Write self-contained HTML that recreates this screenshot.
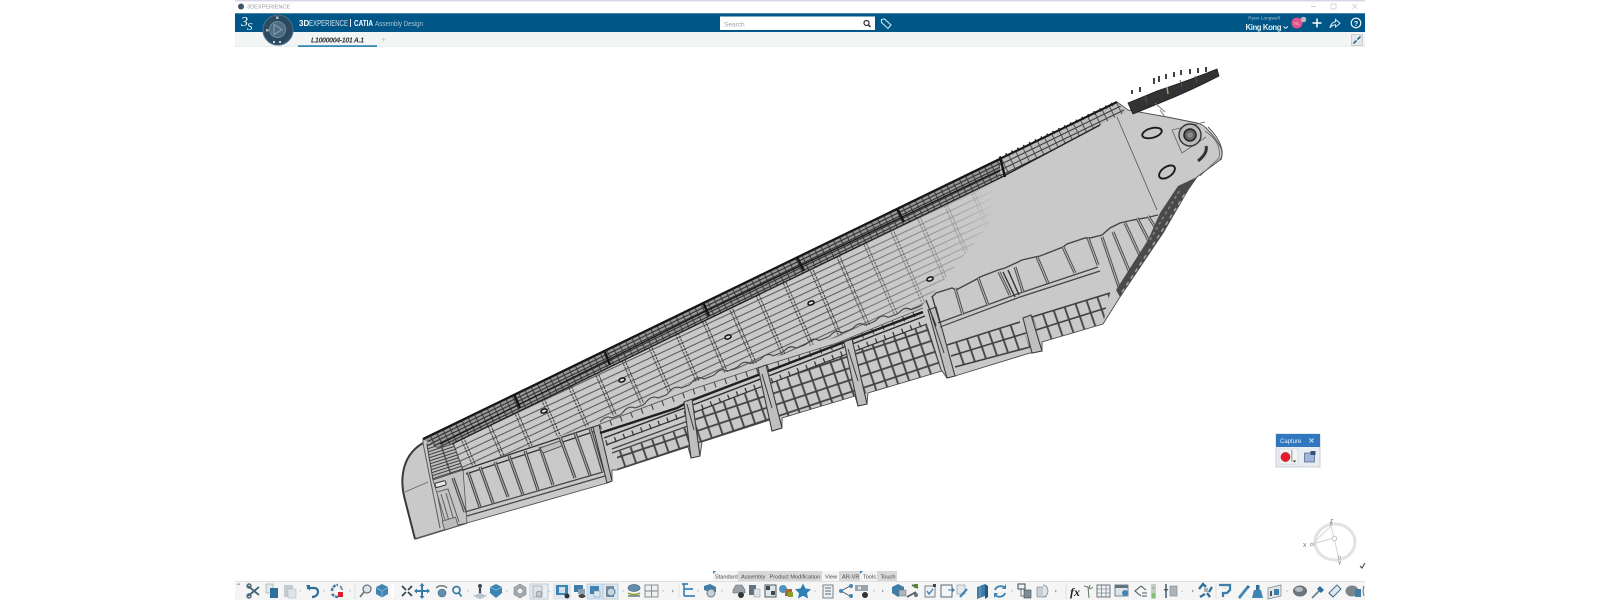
<!DOCTYPE html>
<html><head><meta charset="utf-8"><title>3DEXPERIENCE CATIA Assembly Design</title>
<style>html,body{margin:0;padding:0;background:#fff;width:1600px;height:600px;overflow:hidden}svg{display:block;font-family:"Liberation Sans",sans-serif;filter:blur(.35px)}</style></head>
<body>
<svg width="1600" height="600" viewBox="0 0 1600 600" xmlns="http://www.w3.org/2000/svg">
<defs>
<pattern id="span" patternUnits="userSpaceOnUse" width="40" height="6.6" patternTransform="translate(690,308) rotate(-25)"><line x1="0" x2="40" y1="2" y2="2" stroke="#4c4c4c" stroke-width=".95"/></pattern>
<pattern id="rib" patternUnits="userSpaceOnUse" width="40" height="29.8" patternTransform="translate(787,282) rotate(66.5)"><line x1="0" x2="40" y1="1" y2="1" stroke="#383838" stroke-width="1" stroke-dasharray="2.4 .9"/><line x1="0" x2="40" y1="3.8" y2="3.8" stroke="#383838" stroke-width="1" stroke-dasharray="2.4 .9"/></pattern>
<pattern id="band" patternUnits="userSpaceOnUse" width="7" height="3.4" patternTransform="translate(423,439) rotate(-25.9)"><rect width="7" height="3.4" fill="#9a9a9a"/><line x1="0" x2="7" y1=".8" y2=".8" stroke="#222" stroke-width="1"/><line x1="1" x2="1" y1="0" y2="3.4" stroke="#333" stroke-width=".9"/></pattern>
<pattern id="band2" patternUnits="userSpaceOnUse" width="8" height="5" patternTransform="translate(1000,158) rotate(-25.9)"><rect width="8" height="5" fill="#bcbcbc"/><line x1="0" x2="8" y1="1" y2="1" stroke="#333" stroke-width="1"/><line x1="1" x2="1" y1="0" y2="5" stroke="#444" stroke-width=".9"/></pattern>
<pattern id="gridc" patternUnits="userSpaceOnUse" width="20" height="11.4" patternTransform="translate(700,400) rotate(71)"><line x1="0" x2="20" y1="1.2" y2="1.2" stroke="#444" stroke-width="1.800"/></pattern>
<pattern id="gridr" patternUnits="userSpaceOnUse" width="20" height="11.5" patternTransform="translate(690,408) rotate(-18.4)"><line x1="0" x2="20" y1="1" y2="1" stroke="#404040" stroke-width="1.700"/></pattern>
<pattern id="stripes" patternUnits="userSpaceOnUse" width="20" height="3" patternTransform="rotate(-18)"><rect width="20" height="3" fill="#bdbdbd"/><line x1="0" x2="20" y1="1" y2="1" stroke="#3d3d3d" stroke-width="1"/></pattern>
<linearGradient id="fade" gradientUnits="userSpaceOnUse" x1="830" y1="0" x2="1000" y2="0"><stop offset="0" stop-color="#c9c9c9" stop-opacity="0"/><stop offset=".8" stop-color="#c9c9c9" stop-opacity=".7"/><stop offset="1" stop-color="#c9c9c9" stop-opacity="1"/></linearGradient>
<path id="tipribs" d="M453 478L465 512M468 472L480 507M480 467L493 503M495 462L508 497M509 456L523 495M525 451L538 490M540 447L553 485M560 437L575 478M575 433L590 475M590 428L603 472"/>
<path id="pilribs" d="M955 288L963 315M978 278L988 305M999 272L1010 295M1015 267L1023 292M1037 257L1048 283M1063 247L1075 273M1088 238L1098 265M1102 237L1120 290M1113 232L1130 273M1125 223L1142 260M1137 218L1150 243M1148 216L1157 230"/>
</defs>

<!-- window chrome -->
<rect x="235" y="0" width="1130" height="1.4" fill="#d6d6ea"/>
<circle cx="241" cy="6.5" r="3" fill="#3e5568"/>
<text x="247" y="8.6" font-size="5.6" fill="#9a9a9a">3DEXPERIENCE</text>
<rect x="1311" y="6" width="5" height=".8" fill="#c4c4c4"/>
<rect x="1331" y="4" width="5" height="5" fill="none" stroke="#cfcfcf" stroke-width=".8"/>
<path d="M1352.5 4.2l4.6 4.6M1357.1 4.2l-4.6 4.6" stroke="#cfcfcf" stroke-width=".8"/>

<rect x="235" y="13" width="1130" height="19" fill="#005686"/>
<rect x="235" y="13" width="1130" height=".8" fill="#5a94b4"/>
<rect x="235" y="32" width="1130" height="15" fill="#f3f5f5"/>
<rect x="235" y="46.4" width="1130" height=".6" fill="#e4e8ea"/>

<text x="241" y="26" font-size="14" font-style="italic" fill="#fff" font-family="Liberation Serif">3</text>
<text x="247" y="30" font-size="11" font-style="italic" fill="#fff" font-family="Liberation Serif">S</text>
<circle cx="278" cy="30" r="15.5" fill="#2b4a62"/>
<circle cx="278" cy="30" r="15" fill="none" stroke="#4f7088" stroke-width="1"/>
<circle cx="277.500" cy="29.500" r="8" fill="#4d6b80" stroke="#6f8a9c"/>
<path d="M274 24.500l8 5-8 5z" fill="none" stroke="#7f9aac" stroke-width="1.200"/>
<rect x="276" y="16.500" width="2.500" height="2.500" fill="#a8b8c4"/>
<rect x="266" y="29" width="2.500" height="2.500" fill="#a8b8c4"/>
<rect x="273" y="41" width="2" height="2" fill="#c8d4dc"/><rect x="279" y="41" width="2" height="2" fill="#c8d4dc"/>
<text x="299" y="26" font-size="8" font-weight="bold" fill="#fff">3D</text>
<text x="309" y="26" font-size="8" fill="#d4e2ea" textLength="39" lengthAdjust="spacingAndGlyphs">EXPERIENCE</text>
<rect x="350" y="19" width=".9" height="8" fill="#fff"/>
<text x="354" y="26" font-size="8" font-weight="bold" fill="#fff" textLength="19" lengthAdjust="spacingAndGlyphs">CATIA</text>
<text x="375" y="26" font-size="7.200" fill="#a9c6d8" textLength="48" lengthAdjust="spacingAndGlyphs">Assembly Design</text>

<text x="311" y="42.500" font-size="7" font-weight="bold" font-style="italic" fill="#333" textLength="53">L1000004-101 A.1</text>
<rect x="298" y="45.200" width="79" height="1.800" fill="#3a88b4"/>
<text x="381" y="42" font-size="8" fill="#c4c8ca">+</text>

<rect x="720" y="16.500" width="155" height="13.500" fill="#fff"/>
<text x="724" y="26.500" font-size="6.500" fill="#9ba4aa">Search</text>
<circle cx="866.500" cy="23" r="2.500" fill="none" stroke="#333" stroke-width="1.200"/><path d="M868.500 25l2 2" stroke="#333" stroke-width="1.500"/>
<path d="M881.500 19.500l3-.5 6.500 6-3 3.500-6.500-6z" fill="none" stroke="#cfe2ee" stroke-width="1.100"/>

<text x="1264" y="19.500" font-size="4.800" fill="#a6c6da" text-anchor="middle">Ryan Longwell</text>
<text x="1263.500" y="29.800" font-size="7.800" font-weight="bold" fill="#e4eef4" text-anchor="middle" textLength="36" lengthAdjust="spacing">King Kong</text>
<path d="M1283.500 26.500l2.200 1.800 2.200-1.800" fill="none" stroke="#fff" stroke-width=".9"/>
<circle cx="1297" cy="23" r="5.500" fill="#e4508f"/>
<text x="1297" y="25" font-size="4.500" fill="#f4c0d8" text-anchor="middle">RL</text>
<circle cx="1303.500" cy="19.500" r="2.800" fill="#b8bcc0"/>
<path d="M1317 18.500v9M1312.500 23h9" stroke="#fff" stroke-width="1.500"/>
<path d="M1330 28c.5-4 3-6 5.500-6.200v-2.300l4.500 3.800-4.500 3.800v-2.300c-2 0-4 1-5.500 3z" fill="none" stroke="#dfeaf0" stroke-width="1"/>
<circle cx="1356" cy="23" r="4.800" fill="none" stroke="#fff" stroke-width="1.100"/>
<text x="1356" y="25.800" font-size="7" font-weight="bold" fill="#fff" text-anchor="middle">?</text>
<rect x="1351.500" y="34.500" width="11" height="11" fill="#e4e8ea" stroke="#b4bcc0" stroke-width=".6"/>
<path d="M1353.500 43.500l3-3M1360.500 36.500l-3 3" stroke="#0d4f78" stroke-width="1.400"/>

<!-- wing -->
<g>
<path fill="#c9c9c9" stroke="#4a4a4a" stroke-width=".9" d="M423 439L1117 102L1128 110L1167 117L1197 123Q1204 125 1208 130Q1217 139 1222 150Q1223 156 1220 160L1197 177L1188 190L1163 233L1120 297L1103 324L1042 342L1042 351L1032 353L1030 353L955 376L947 378L942 371L868 393L867 404L858 406L855 396L782 418L782 428L772 431L770 420L702 442L700 456L691 458L688 447L617 470L612 470L612 481L607 483L467 523L415 539L405 500Q401 485 403 473Q406 453 423 443Z"/>

<!-- nose -->
<path d="M423 443Q406 453 403 473Q401 485 405 500L415 539" fill="none" stroke="#3a3a3a" stroke-width="2"/>
<path d="M405 492L428 482" stroke="#666" stroke-width=".8"/>
<path d="M415 539L467 523" stroke="#555" stroke-width="1.700"/>
<path d="M423 443L440 528M427 443L444 527" stroke="#5a5a5a" stroke-width="1"/>
<polygon points="427,445 452,440 463,470 433,480" fill="url(#stripes)" stroke="#444" stroke-width="1"/>
<path d="M440 442L451 475" stroke="#444" stroke-width="1.200"/>
<polygon points="433,480 463,470 467,523 447,527" fill="#c4c4c4" stroke="#555" stroke-width=".8"/>
<rect x="435" y="482" width="11" height="4.500" rx="1.500" fill="#e6e6e6" stroke="#333" transform="rotate(-16 440 484)"/>
<path d="M437 492L448 489L459 522M441 494L449 521M446 493L454 521" fill="none" stroke="#666" stroke-width="1.100"/>
<rect x="443" y="519" width="14" height="9" fill="#bbb" stroke="#555" stroke-width=".8" transform="rotate(-17 450 523)"/>

<!-- upper skin lines and ribs -->
<polygon points="452,440 1000,173 1000,212 923,305 837,337 757,363 690,383 600,422 463,470" fill="url(#span)"/>
<polygon points="452,440 1000,173 1000,212 923,305 837,337 757,363 690,383 600,422 463,470" fill="url(#rib)"/>
<polygon points="830,250 1000,168 1005,212 923,305 837,337 830,340" fill="url(#fade)"/>

<!-- leading-edge band -->
<polygon points="423,439 1000,158 1000,178 452,444 437,448" fill="url(#band)"/>
<polygon points="1000,158 1117,102 1126,112 1100,125 1000,178" fill="url(#band2)"/>
<path d="M423 439L1117 102" stroke="#161616" stroke-width="2.100"/>
<path d="M1000 158L1117 102" stroke="#222" stroke-width="3.400" stroke-dasharray="1.500 5"/>
<path d="M452 444L700 323L1000 178L1100 125" fill="none" stroke="#222" stroke-width="1.400"/>
<path d="M440 444L700 314L1000 170" fill="none" stroke="#1c1c1c" stroke-width="1.400"/>
<path d="M514 394L520 408M604 350L610 365M703 302L709 316M797 257L804 271M897 208L904 222M1000 157L1005 177" stroke="#151515" stroke-width="2.400"/>

<!-- holes -->
<g fill="#dcdcdc" stroke="#111" stroke-width="1.500">
<ellipse cx="544" cy="411" rx="3.200" ry="1.900" transform="rotate(-20 544 411)"/>
<ellipse cx="622" cy="380" rx="3.200" ry="1.900" transform="rotate(-20 622 380)"/>
<ellipse cx="728" cy="337" rx="3.200" ry="1.900" transform="rotate(-20 728 337)"/>
<ellipse cx="811" cy="303" rx="3.200" ry="1.900" transform="rotate(-20 811 303)"/>
<ellipse cx="930" cy="279" rx="3.200" ry="1.900" transform="rotate(-20 930 279)"/>
</g>

<!-- tip bays -->
<path d="M463 470L593 427M466 474L596 431" stroke="#333" stroke-width="1.300"/>
<path d="M465 512L603 472M467 516L605 476" stroke="#444" stroke-width="1.200"/>
<use href="#tipribs" fill="none" stroke="#4a4a4a" stroke-width="3.200"/>
<use href="#tipribs" fill="none" stroke="#b4b4b4" stroke-width="1"/>
<polygon points="540,448 560,441 562,446 543,453" fill="#c0c0c0" stroke="#555"/>
<polygon points="593,427 599,425 612,481 607,483" fill="#b8b8b8" stroke="#333" stroke-width="1"/>

<!-- spar -->
<path d="M600 422q6 -7 12 -4l8 -3q2 -1 3 -3q6 -7 12 -4l8 -3q2 -1 3 -3q6 -7 12 -4l8 -3q2 -1 3 -3q6 -7 12 -4l8 -3q2 -1 3 -3" fill="none" stroke="#444" stroke-width="1.100"/>
<path d="M692 382q6 -7 12 -3l8 -3q2 -1 3 -1.700q6 -7 12 -3l8 -3q2 -1 3 -1.700q6 -7 12 -3l8 -3q2 -1 3 -1.700q6 -7 12 -3l8 -3q2 -1 3 -1.700q6 -7 12 -3l8 -3q2 -1 3 -1.700q6 -7 12 -3l8 -3q2 -1 3 -1.700q6 -7 12 -3l8 -3q2 -1 3 -1.700q6 -7 12 -3l8 -3q2 -1 3 -1.700q6 -7 12 -3l8 -3q2 -1 3 -1.700q6 -7 12 -3l8 -3q2 -1 3 -1.700" fill="none" stroke="#444" stroke-width="1.100"/>
<path d="M600 427L690 393L757 371L837 346L923 311" fill="none" stroke="#444" stroke-width="5.500" stroke-dasharray="1.100 10"/>
<path d="M600 424L690 390L757 368L837 343L923 308" fill="none" stroke="#555" stroke-width=".9"/>
<path d="M600 433L677 408L690 401L847 341L923 312" fill="none" stroke="#1f1f1f" stroke-width="2.400"/>
<path d="M604 438L690 406L847 346L925 316" fill="none" stroke="#2c2c2c" stroke-width="1.400"/>
<path d="M606 443L690 412L847 352L927 322" fill="none" stroke="#3c3c3c" stroke-width="5.500" stroke-dasharray="1.300 8"/>
<path d="M606 445L690 414L847 354L927 324" fill="none" stroke="#333" stroke-width="1.200"/>

<!-- lower grids -->
<polygon points="617,452 690,426 688,447 617,470" fill="url(#gridc)"/>
<polygon points="617,452 690,426 688,447 617,470" fill="url(#gridr)"/>
<path d="M612 449L688 421M612 453L688 426" stroke="#444" stroke-width="1.300"/>
<polygon points="690,414 927,324 942,371 868,393 855,396 782,418 770,420 702,442 688,447" fill="url(#gridc)"/>
<polygon points="690,414 927,324 942,371 868,393 855,396 782,418 770,420 702,442 688,447" fill="url(#gridr)"/>
<polygon points="947,345 1020,322 1030,347 955,367" fill="url(#gridc)"/>
<polygon points="1032,317 1110,293 1103,324 1042,342" fill="url(#gridc)"/>
<path d="M947 345L1020 322M951 356L1026 333M955 367L1030 347M1032 317L1110 293M1036 330L1106 308" stroke="#3f3f3f" stroke-width="1.600" fill="none"/>

<!-- tabs -->
<g fill="#bfbfbf" stroke="#3c3c3c" stroke-width="1.100">
<polygon points="684,402 692,399 700,456 691,458"/>
<polygon points="758,368 766,365 782,428 772,431"/>
<polygon points="844,342 852,339 867,404 858,406"/>
<polygon points="928,310 936,307 955,376 947,378"/>
<polygon points="1023,318 1031,315 1042,351 1032,353"/>
</g>
<path d="M687 404l7 26M762 374l10 34M848 349l10 32M932 317l12 36" stroke="#3c3c3c" stroke-width="1"/>

<!-- pillows -->
<path d="M932 297L936 293L952 288L956 290L975 280L980 277L998 270L1005 268L1018 262L1022 260L1035 257L1040 256L1063 247L1067 244L1085 238L1090 238L1102 235L1110 228L1120 223L1133 220L1145 218L1158 215" fill="none" stroke="#444" stroke-width="1.400"/>
<path d="M938 323L1020 293L1098 267M940 327L1020 297L1100 271" fill="none" stroke="#444" stroke-width="1.200"/>
<use href="#pilribs" fill="none" stroke="#4f4f4f" stroke-width="3"/>
<use href="#pilribs" fill="none" stroke="#bdbdbd" stroke-width="1"/>
<path d="M1003 272l12 25M1008 270l11 25" stroke="#333" stroke-width="1.400"/>
<path d="M932 296L940 323M926 300L936 326" stroke="#333" stroke-width="1.300"/>

<!-- root -->
<path d="M1117 117L1157 210" stroke="#555" stroke-width=".8"/>
<polygon points="1160,213 1178,186 1197,177 1188,190 1163,233 1120,297 1116,290 1148,240" fill="#4a4a4a"/>
<path d="M1122 292L1160 234L1186 192" fill="none" stroke="#a0a0a0" stroke-width="1.600" stroke-dasharray="4 4"/>
<path d="M1150 240L1164 216L1180 190" fill="none" stroke="#8a8a8a" stroke-width="1.400" stroke-dasharray="3 3"/>
<path d="M1172 130L1205 122M1172 130L1182 153L1206 137" fill="none" stroke="#666" stroke-width=".9"/>
<path d="M1205 131Q1222 142 1219 158L1200 176" fill="none" stroke="#666" stroke-width=".8"/>
<path d="M1208 127Q1226 145 1221 160" fill="none" stroke="#555" stroke-width="1"/>
<ellipse cx="1152" cy="133" rx="10" ry="4.800" transform="rotate(-15 1152 133)" fill="#c8c8c8" stroke="#1c1c1c" stroke-width="1.900"/>
<ellipse cx="1167" cy="172" rx="9" ry="5" transform="rotate(-35 1167 172)" fill="#c8c8c8" stroke="#1c1c1c" stroke-width="1.900"/>
<circle cx="1190" cy="135" r="11" fill="#bcbcbc" stroke="#333" stroke-width="1.400"/>
<circle cx="1190" cy="135" r="6" fill="#666" stroke="#222" stroke-width="1.500"/>
<circle cx="1190" cy="135" r="2.800" fill="#8a8a8a"/>
<path d="M1206 146Q1208 153 1198 161" fill="none" stroke="#333" stroke-width="3"/>

<!-- flap -->
<path d="M1128 103L1157 91Q1190 80 1217 69L1219 76Q1190 91 1160 103L1133 114Z" fill="#333" stroke="#1c1c1c" stroke-width=".8"/>
<path d="M1167 87l1 7" stroke="#a8a86a" stroke-width="1.400"/>
<path d="M1180 80l2 7M1195 76l2 7M1145 96l2 7" stroke="#555" stroke-width=".9"/>
<path d="M1155 103l10 9M1160 110l5 7" stroke="#777" stroke-width=".9"/>
<g stroke="#222" stroke-width="1.700">
<path d="M1132 90v4M1140 87v5M1154 78v6M1159 76v6M1166 74v5M1174 72v5M1181 70v5M1190 69v5M1198 68v5M1206 67v5"/>
</g>
</g>

<!-- capture panel -->
<rect x="1276" y="434" width="44" height="33" fill="#e9ecf1" stroke="#c0c6ce" stroke-width=".8"/>
<rect x="1276" y="434" width="44" height="13" fill="#2f78bf"/>
<text x="1280" y="443" font-size="6" fill="#e4eef8">Capture</text>
<path d="M1309.500 438.500l4 4M1313.500 438.500l-4 4" stroke="#cfe0f2" stroke-width=".9"/>
<rect x="1279" y="449" width="19" height="15" fill="#f2f3f5" stroke="#c8ccd2" stroke-width=".5"/>
<circle cx="1285.500" cy="457" r="4.600" fill="#e81c28" stroke="#a01820" stroke-width=".5"/>
<rect x="1291.500" y="450" width=".8" height="12" fill="#777"/>
<path d="M1293 460.500h3l-1.500 2z" fill="#222"/>
<rect x="1304.500" y="453" width="10" height="9" fill="#9fb6d6" stroke="#4a5f88" stroke-width=".7"/>
<rect x="1310.500" y="451" width="5" height="4" fill="#3d4f78"/>

<!-- compass -->
<ellipse cx="1335" cy="542" rx="20" ry="18" fill="none" stroke="#e2e2e2" stroke-width="3"/>
<path d="M1312 544L1334 538L1331 526L1312 544M1334 538L1339 559" fill="none" stroke="#dadada" stroke-width="1.200"/>
<circle cx="1334.500" cy="538.500" r="2.300" fill="#fff" stroke="#aaa" stroke-width=".7"/>
<path d="M1311 543l3 2-4 1zM1338 556l3 1-2 3zM1330 525l2 0-1-3z" fill="#fff" stroke="#999" stroke-width=".6"/>
<text x="1330" y="523" font-size="5" fill="#555">Z</text>
<text x="1303" y="547" font-size="5" fill="#555">X</text>
<text x="1338" y="565" font-size="5" fill="#555">Y</text>
<path d="M1360 566l2 2 3-5" fill="none" stroke="#444" stroke-width="1.100"/>

<!-- section tabs -->
<rect x="713" y="571" width="184" height="10" fill="#d8d8d8"/>
<rect x="713" y="571" width="25" height="10" fill="#f4f4f4"/>
<rect x="822" y="571" width="17" height="10" fill="#f4f4f4"/>
<rect x="860" y="571" width="17" height="10" fill="#f4f4f4"/>
<path d="M713 571h3l-3 3zM860 571h3l-3 3z" fill="#2f86c4"/>
<g font-size="5.600" fill="#4a4a4a">
<text x="715" y="578.500">Standard</text>
<text x="741" y="578.500">Assembly</text>
<text x="769.500" y="578.500">Product Modification</text>
<text x="825" y="578.500">View</text>
<text x="842" y="578.500">AR-VR</text>
<text x="863" y="578.500">Tools</text>
<text x="880.500" y="578.500">Touch</text>
</g>

<!-- toolbar -->
<rect x="235" y="581" width="1130" height="19" fill="#f5f5f5"/>
<rect x="235" y="581" width="1130" height=".9" fill="#dfdfdf"/>
<path d="M237 585l1.500-1.500 1.500 1.500" fill="none" stroke="#777" stroke-width=".6"/>
<g fill="#9aa0a4">
<circle cx="300" cy="591" r=".6"/><circle cx="324" cy="591" r=".6"/><circle cx="350" cy="591" r=".6"/><circle cx="468" cy="591" r=".6"/><circle cx="507" cy="591" r=".6"/><circle cx="549" cy="591" r=".6"/><circle cx="623" cy="591" r=".6"/><circle cx="663" cy="591" r=".6"/><circle cx="698" cy="591" r=".6"/><circle cx="722" cy="591" r=".6"/><circle cx="815" cy="591" r=".6"/><circle cx="874" cy="591" r=".6"/><circle cx="1012" cy="591" r=".6"/><circle cx="1182" cy="591" r=".6"/><circle cx="1287" cy="591" r=".6"/>
</g>
<path d="M672 589.500l2 1.500-2 1.500M882 589.500l2 1.500-2 1.500M1055 589.500l2 1.500-2 1.500M1192 589.500l2 1.500-2 1.500" fill="#9aa0a4"/>
<path d="M355 583v16M679 583v16M1066 583v16M1216 583v16" stroke="#dcdcdc" stroke-width=".8"/>
<rect x="530" y="584" width="18" height="15" fill="#e8eef2" stroke="#a8c0d0" stroke-width=".7"/>
<rect x="553" y="583.500" width="18" height="16" fill="#e0e8ee"/>
<rect x="587" y="584" width="16" height="15" fill="#d4e4f0" stroke="#a8c8e0" stroke-width=".7"/>
<rect x="603" y="584" width="15" height="15" fill="#e0e8ee" stroke="#a8c0d0" stroke-width=".7"/>

<!-- icons -->
<path d="M248 586l11 9M248 596l11-9" stroke="#466378" stroke-width="1.800"/><circle cx="249" cy="586" r="2" fill="none" stroke="#466378" stroke-width="1.400"/><circle cx="249" cy="596" r="2" fill="none" stroke="#466378" stroke-width="1.400"/>
<rect x="266" y="584" width="7" height="9" fill="#e4e8ec" stroke="#98a4ac" stroke-width=".6"/><rect x="270" y="588" width="8" height="10" fill="#2f6f9c"/>
<rect x="284" y="585" width="9" height="12" fill="#c4ccd0"/><rect x="288" y="589" width="8" height="9" fill="#dfe4e8" stroke="#aab4ba" stroke-width=".5"/>
<path d="M307 588h7c3 0 4 2 4 4s-2 5-6 5" fill="none" stroke="#2f6f9c" stroke-width="2.200"/><path d="M306 585l4 0v6z" fill="#2f6f9c"/>
<path d="M332 591c0-4 3-6 6-6M338 597c-3 0-6-2-6-4" fill="none" stroke="#3f7ca8" stroke-width="2.500" stroke-dasharray="3 1"/><rect x="338" y="592" width="5" height="5" fill="#d8202c"/><path d="M340 586c1 1 2 2 2 4" stroke="#7f98a8" stroke-width="2" fill="none"/>
<circle cx="367" cy="589" r="4" fill="#dfe6ea" stroke="#6a7880" stroke-width="1.300"/><path d="M364 592l-4 5" stroke="#6a7880" stroke-width="1.800"/>
<path d="M382 584l6 3v7l-6 3.500-6-3.500v-7z" fill="#3f85b4"/><path d="M382 591l6-3.500M382 591l-6-3.500M382 591v6" stroke="#a8d0e8" stroke-width=".6"/>
<rect x="391" y="584" width="3" height="14" fill="#fff"/>
<path d="M402 586l4 4M412 586l-4 4M402 596l4-4M412 596l-4-4" stroke="#33404a" stroke-width="1.600"/>
<path d="M422 584v14M415 591h14" stroke="#3a7ca8" stroke-width="2"/><path d="M422 583l-2.500 3h5zM422 599l-2.500-3h5zM414 591l3-2.500v5zM430 591l-3-2.500v5z" fill="#3a7ca8"/>
<path d="M436 588c3-3 8-3 11 0" fill="none" stroke="#6a7880" stroke-width="1.400"/><circle cx="442" cy="593" r="4" fill="#5f8fb0" stroke="#50626e" stroke-width=".6"/>
<circle cx="456.500" cy="590" r="3.500" fill="none" stroke="#3a7ca8" stroke-width="1.700"/><path d="M459 593l2.500 3.500" stroke="#3a7ca8" stroke-width="1.700"/>
<circle cx="480" cy="586" r="2" fill="#3a4c58"/><path d="M480 588v7" stroke="#3a4c58" stroke-width="2.200"/><path d="M473 596l7-3 7 3-7 3z" fill="#b8c4cc"/>
<path d="M496 584l6 3v6l-6 5-6-5v-6z" fill="#3f85b4"/><path d="M496 590l6-3M496 590l-6-3" stroke="#a8d0e8" stroke-width=".6"/>
<path d="M520 584l6 3.500v7l-6 3.500-6-3.500v-7z" fill="#a4acb2" stroke="#7a848a" stroke-width=".6"/><circle cx="520" cy="591" r="3" fill="#eef0f2" stroke="#7a848a" stroke-width=".7"/>
<rect x="533" y="586" width="9" height="11" fill="#dfe4e8" stroke="#94a0a8" stroke-width=".7"/><circle cx="539" cy="594" r="3" fill="#c0c8cc" stroke="#7a848a" stroke-width=".6"/>
<rect x="556" y="585" width="12" height="10" fill="#3f85b4"/><rect x="559" y="587" width="6" height="6" fill="#cfe0ec"/><circle cx="567" cy="596" r="2.500" fill="#333"/>
<rect x="574" y="585" width="9" height="7" fill="#3f7ca8"/><rect x="578" y="589" width="7" height="5" fill="#8aa0b0"/><ellipse cx="582" cy="596" rx="3.500" ry="2" fill="#444"/>
<rect x="590" y="586" width="9" height="8" fill="#3f85b4"/><rect x="594" y="591" width="6" height="6" fill="#dfe8ee" stroke="#7a8a94" stroke-width=".5"/>
<rect x="606" y="586" width="8" height="11" fill="#7f8c94"/><circle cx="611" cy="592" r="4" fill="#c8d4dc" stroke="#3f7ca8" stroke-width="1"/>
<ellipse cx="634" cy="588" rx="6" ry="3.500" fill="#5f8fb0" stroke="#5a6a74" stroke-width=".7"/><path d="M628 593c3 2 9 2 12 0" fill="none" stroke="#88a030" stroke-width="1.500"/><path d="M628 596h12" stroke="#6a7880" stroke-width="1.500"/>
<rect x="645" y="585" width="13" height="12" fill="#eef0f2" stroke="#7a848a" stroke-width=".9"/><path d="M651.500 585v12M645 591h13" stroke="#7a848a" stroke-width=".9"/>
<path d="M682 584h6M684 584v12M684 589h9M684 596h11" stroke="#3f85b4" stroke-width="1.700" fill="none"/>
<path d="M710 584l6 3v5h-6l-6-2v-4z" fill="#3f7ca8"/><circle cx="711" cy="593" r="4" fill="#c8d0d6" stroke="#6a7880"/>
<path d="M733 590l3-5h6l3 5v3h-12z" fill="#98a2a8" stroke="#5a6a74" stroke-width=".6"/><circle cx="741" cy="595" r="3" fill="#333"/>
<rect x="749" y="585" width="7" height="10" fill="#5f7480"/><rect x="754" y="589" width="6" height="8" fill="#dfe4e8" stroke="#8a949a" stroke-width=".5"/>
<rect x="765" y="585" width="11" height="12" fill="#dfe4e8" stroke="#4a5a64"/><rect x="766" y="586" width="4" height="4" fill="#3c4a54"/><rect x="771" y="591" width="4" height="4" fill="#3c4a54"/>
<circle cx="783" cy="589" r="4" fill="#4f93c0"/><rect x="785" y="589" width="7" height="7" fill="#a86a30"/><rect x="788" y="592" width="5" height="5" fill="#88a030"/>
<path d="M803 583.500l2.500 5 5.500.7-4 3.800 1 5.500-5-2.700-5 2.700 1-5.500-4-3.800 5.500-.7z" fill="#2f7fb4"/>
<rect x="823" y="585" width="10" height="13" fill="#eef0f2" stroke="#5a6a74" stroke-width=".8"/><path d="M825 588h6M825 591h6M825 594h6" stroke="#5a6a74"/>
<path d="M841 591l9-5M841 591l9 5" stroke="#4a5a64"/><circle cx="841" cy="591" r="2" fill="#3f85b4"/><circle cx="851" cy="586" r="2" fill="#3f85b4"/><circle cx="851" cy="596" r="2" fill="#3f85b4"/>
<rect x="855" y="585" width="13" height="6" fill="#9aa4aa"/><rect x="858" y="586.500" width="3" height="3" fill="#dfe4e8"/><circle cx="865" cy="595" r="3" fill="#333"/>
<path d="M898 584l6 3v6l-6 4-6-4v-6z" fill="#3f7ca8"/><rect x="899" y="590" width="7" height="6" fill="#aab4ba" stroke="#6a7880" stroke-width=".5"/>
<path d="M907 597l9-5M912 585l6 3" stroke="#4a5a64" stroke-width="1.600"/><rect x="914" y="584" width="4" height="4" fill="#4f8a30"/><circle cx="916" cy="595" r="2" fill="#66707a"/>
<rect x="925" y="586" width="10" height="11" fill="#eef0f2" stroke="#5a6a74" stroke-width=".8"/><path d="M927 591l2 3 4-5" fill="none" stroke="#3f7ca8" stroke-width="1.300"/><rect x="933" y="584" width="3" height="3" fill="#3c4a54"/>
<rect x="941" y="585" width="11" height="12" fill="#f4f5f6" stroke="#4a5a64" stroke-width=".9"/><path d="M948 590h6l-2-2M954 590l-2 2" fill="none" stroke="#3f7ca8"/>
<rect x="957" y="585" width="8" height="9" fill="#e4e8ec" stroke="#8a949a" stroke-width=".6"/><path d="M960 597l7-8" stroke="#3f85b4" stroke-width="2.200"/>
<path d="M977 587l8-3v12l-8 3z" fill="#3f7ca8"/><path d="M985 584l3 2v11l-3 2z" fill="#28567a"/><path d="M980 586v11" stroke="#a8d0e8" stroke-width=".5"/>
<path d="M995 590c1-4 7-5 10-2M1005 593c-1 4-7 5-10 2" fill="none" stroke="#3f85b4" stroke-width="1.900"/><path d="M1006 584v5h-4zM994 598v-5h4z" fill="#3f85b4"/>
<rect x="1018" y="584" width="7" height="5" fill="#eef0f2" stroke="#3c4a54"/><rect x="1024" y="590" width="7" height="8" fill="#7f8c94" stroke="#3c4a54" stroke-width=".6"/><path d="M1021 589v7h3" fill="none" stroke="#3c4a54" stroke-width=".7"/>
<rect x="1037" y="587" width="9" height="10" fill="#c8d0d6" stroke="#7a848a" stroke-width=".6"/><path d="M1043 585c3 0 5 3 5 6s-2 6-5 6" fill="#dfe4e8" stroke="#7a848a" stroke-width=".7"/>
<text x="1070" y="596" font-size="12" font-style="italic" font-weight="bold" font-family="Liberation Serif" fill="#222">fx</text>
<path d="M1084 586l4 1 1 11M1090 585l-1 4M1093 587l-3 2" fill="none" stroke="#5a7a68" stroke-width="1"/>
<rect x="1097" y="585" width="13" height="12" fill="#eef0f2" stroke="#5a6a74" stroke-width=".9"/><path d="M1097 589h13M1097 593h13M1101.500 585v12M1106 585v12" stroke="#5a6a74" stroke-width=".6"/>
<rect x="1115" y="585" width="13" height="11" fill="#dfe4e8" stroke="#5a6a74" stroke-width=".8"/><rect x="1115" y="585" width="13" height="3" fill="#5f7480"/><circle cx="1125" cy="593" r="3" fill="#3f85b4"/>
<path d="M1141 586l-6 5 6 5M1141 586l5 4" fill="none" stroke="#4a5a64" stroke-width="1.100"/><path d="M1142 593h5M1142 596h5" stroke="#4a5a64"/>
<rect x="1151" y="584" width="5" height="15" rx="1" fill="#c8ccc8"/><rect x="1151.800" y="593" width="3.400" height="5" fill="#7cc070"/><circle cx="1153.500" cy="588" r="1.300" fill="#aab0aa"/>
<path d="M1166 584v14" stroke="#4a5a64" stroke-width="1.500"/><path d="M1163.500 589l2.500 3 2.500-3z" fill="#4a5a64"/><rect x="1170" y="586" width="7" height="10" fill="#aab4ba" stroke="#7a848a" stroke-width=".6"/>
<path d="M1199 589l4-5 3 3M1212 587l-3 5M1200 597l5-3M1210 597l-3-4" stroke="#2f6f9c" stroke-width="2.300" fill="none"/><rect x="1204" y="588" width="4" height="4" fill="#aab4ba"/>
<path d="M1219 585h11v5l-3 3h-4v4" fill="none" stroke="#3f7ca8" stroke-width="2.300"/><path d="M1222 588h5" stroke="#cfe0ec"/>
<path d="M1238 597l8-10 2 2-8 10z" fill="#3f85b4"/><path d="M1246 587l2-2 2 2-2 2z" fill="#2f6f9c"/>
<path d="M1254 590h7l2 8h-11z" fill="#3f85b4"/><rect x="1256" y="585" width="3.500" height="5" fill="#2f6f9c"/>
<path d="M1268 588l13-3v11l-13 3z" fill="#dfe4e8" stroke="#7a848a" stroke-width=".7"/><rect x="1274" y="589" width="5" height="6" fill="#3f7ca8"/><rect x="1270" y="591" width="2" height="5" fill="#4a5a64"/>
<ellipse cx="1300" cy="591" rx="7" ry="5.500" fill="#6a757c"/><ellipse cx="1299" cy="589.500" rx="4" ry="2.500" fill="#b4bcc2"/>
<path d="M1312 598l9-9" stroke="#66808f" stroke-width="1.700"/><path d="M1320 586l4 4-3 3-4-4z" fill="#2f6f9c"/>
<path d="M1329 593l8-8 4 4-8 8z" fill="#e4e8ec" stroke="#3f6f8f" stroke-width="1"/><path d="M1329 593l4 4" stroke="#3f6f8f"/>
<ellipse cx="1352" cy="591" rx="6.500" ry="5.500" fill="#7a858c"/><rect x="1355" y="589" width="6" height="8" fill="#3f7ca8"/>
<path d="M1364 586c-1 3-1 7 0 10" fill="none" stroke="#7a848a" stroke-width="1.200"/>
</svg>
</body></html>
